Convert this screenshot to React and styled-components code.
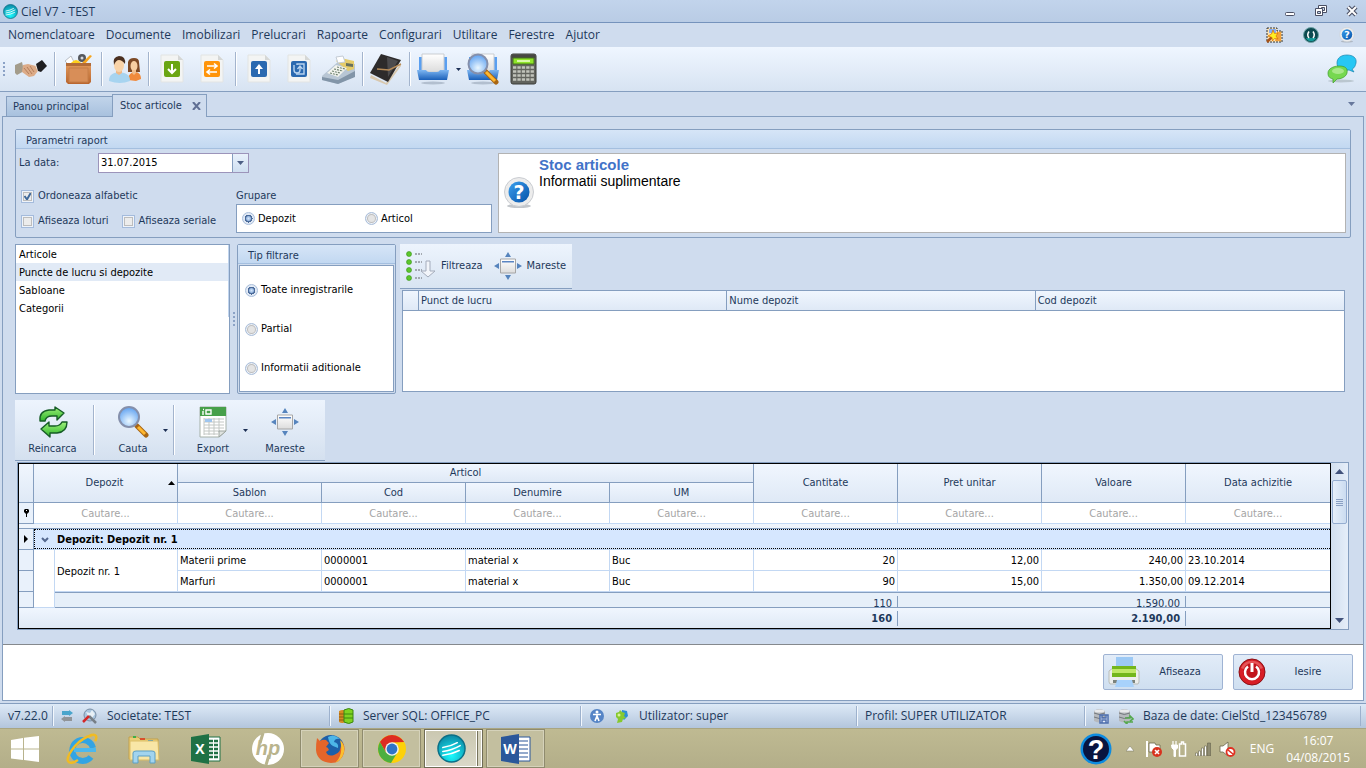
import React from "react";
import styled, { createGlobalStyle, css } from "styled-components";

const menus = [
  "Nomenclatoare",
  "Documente",
  "Imobilizari",
  "Prelucrari",
  "Rapoarte",
  "Configurari",
  "Utilitare",
  "Ferestre",
  "Ajutor",
];

const sources = ["Articole", "Puncte de lucru si depozite", "Sabloane", "Categorii"];

const rows = [
  ["Materii prime", "0000001", "material x", "Buc", "20", "12,00", "240,00", "23.10.2014"],
  ["Marfuri", "0000001", "material x", "Buc", "90", "15,00", "1.350,00", "09.12.2014"],
];

const App = () => {
  return (
    <Page>
      <GlobalStyle />
      <Gradients />
      <TitleBar>
        <CielIcon size={15} />
        <Title>Ciel V7 - TEST</Title>
        <WindowButton aria-label="Minimize">
          <svg width="14" height="14" viewBox="0 0 14 14">
            <rect x="2.5" y="8.5" width="9" height="3" rx="1" fill="#fff" stroke="#4a4f63" />
          </svg>
        </WindowButton>
        <WindowButton aria-label="Restore">
          <svg width="14" height="14" viewBox="0 0 14 14">
            <path d="M4.500 1.500h8v7h-8z" fill="#fff" stroke="#4a4f63" />
            <path d="M7.500 3.500h3v3h-3z" fill="#c2d2e9" stroke="#4a4f63" />
            <path d="M1.500 4.500h7v7h-7z" fill="#fff" stroke="#4a4f63" />
            <path d="M3.500 7.500h3v2h-3z" fill="#c2d2e9" stroke="#4a4f63" />
          </svg>
        </WindowButton>
        <WindowButton aria-label="Close">
          <svg width="14" height="14" viewBox="0 0 14 14">
            <path d="M3 3l8 8M11 3l-8 8" stroke="#4a4f63" strokeWidth="4.200" />
            <path d="M3 3l8 8M11 3l-8 8" stroke="#fff" strokeWidth="2" />
          </svg>
        </WindowButton>
      </TitleBar>

      <MenuBar>
        {menus.map((m) => (
          <MenuItem key={m}>{m}</MenuItem>
        ))}
        <MenuIcons>
          <WandIcon />
          <GlobeIcon />
          <HelpIcon size={16} />
        </MenuIcons>
      </MenuBar>

      <ToolBar>
        <Handle />
        <ToolButton aria-label="Parteneri"><HandshakeIcon /></ToolButton>
        <Separator />
        <ToolButton aria-label="Articole"><BoxIcon /></ToolButton>
        <Separator />
        <ToolButton aria-label="Personal"><PeopleIcon /></ToolButton>
        <Separator />
        <ToolButton aria-label="Intrari"><DocIcon fill="#6aa512" sign="down" /></ToolButton>
        <ToolButton aria-label="Transferuri"><DocIcon fill="#ff9408" sign="swap" /></ToolButton>
        <Separator />
        <ToolButton aria-label="Iesiri"><DocIcon fill="#2a69b0" sign="up" /></ToolButton>
        <ToolButton aria-label="Retururi"><DocIcon fill="#2a69b0" sign="turn" /></ToolButton>
        <ToolButton aria-label="Casa"><RegisterIcon /></ToolButton>
        <Separator />
        <ToolButton aria-label="Jurnal"><BookIcon /></ToolButton>
        <Separator />
        <ToolButton aria-label="Rapoarte"><TrayIcon /></ToolButton>
        <DropArrow aria-label="Alte rapoarte"><Caret /></DropArrow>
        <ToolButton aria-label="Cauta rapoarte"><TrayIcon search /></ToolButton>
        <ToolButton aria-label="Calculator"><CalculatorIcon /></ToolButton>
        <ChatButton aria-label="Chat"><ChatIcon /></ChatButton>
      </ToolBar>

      <TabStrip>
        <Tab>Panou principal</Tab>
        <Tab $active>
          Stoc articole
          <svg width="10" height="8" viewBox="0 0 10 8">
            <path d="M1 0l7 8M8 0l-7 8" stroke="#5f6f94" strokeWidth="2" />
          </svg>
        </Tab>
        <TabMenu aria-label="Lista ferestre"><Caret color="#66779c" wide /></TabMenu>
      </TabStrip>

      <Panel>
        <Content>
          <Group>
            <GroupTitle>Parametri raport</GroupTitle>
            <Params>
              <Options>
                <DateRow>
                  <DateLabel htmlFor="date">La data:</DateLabel>
                  <DateField>
                    <DateInput id="date" defaultValue="31.07.2015" />
                    <DateButton aria-label="Alege data"><Caret color="#4d5f85" wide /></DateButton>
                  </DateField>
                </DateRow>
                <CheckRow>
                  <Check><CheckBox defaultChecked />Ordoneaza alfabetic</Check>
                </CheckRow>
                <CheckRow>
                  <Check><CheckBox />Afiseaza loturi</Check>
                  <Check><CheckBox />Afiseaza seriale</Check>
                </CheckRow>
              </Options>
              <Grouping>
                <span>Grupare</span>
                <GroupingBox>
                  <RadioLabel><Radio name="group" defaultChecked />Depozit</RadioLabel>
                  <RadioLabel><Radio name="group" />Articol</RadioLabel>
                </GroupingBox>
              </Grouping>
              <Info>
                <HelpIcon size={32} />
                <div>
                  <InfoTitle>Stoc articole</InfoTitle>
                  <InfoText>Informatii suplimentare</InfoText>
                </div>
              </Info>
            </Params>
          </Group>

          <Filters>
            <List role="listbox">
              {sources.map((s, i) => (
                <ListItem key={s} role="option" aria-selected={i === 1} $selected={i === 1}>
                  {s}
                </ListItem>
              ))}
            </List>
            <Splitter><Dots /></Splitter>
            <FilterType>
              <GroupTitle>Tip filtrare</GroupTitle>
              <FilterOptions>
                <RadioLabel><Radio name="type" defaultChecked />Toate inregistrarile</RadioLabel>
                <RadioLabel><Radio name="type" />Partial</RadioLabel>
                <RadioLabel><Radio name="type" />Informatii aditionale</RadioLabel>
              </FilterOptions>
            </FilterType>
            <FilterResult>
              <FilterBar>
                <FlatButton><FilterIcon />Filtreaza</FlatButton>
                <FlatButton><EnlargeIcon />Mareste</FlatButton>
              </FilterBar>
              <DepotBox>
                <DepotTable>
                  <colgroup>
                    <col style={{ width: 16 }} />
                    <col />
                    <col />
                    <col />
                  </colgroup>
                  <thead>
                    <tr>
                      <th />
                      <th>Punct de lucru</th>
                      <th>Nume depozit</th>
                      <th>Cod depozit</th>
                    </tr>
                  </thead>
                </DepotTable>
              </DepotBox>
            </FilterResult>
          </Filters>

          <Actions>
            <Action $wide><ReloadIcon />Reincarca</Action>
            <ActionSeparator />
            <Action><SearchIcon />Cauta</Action>
            <DropArrow aria-label="Optiuni cautare"><Caret /></DropArrow>
            <ActionSeparator />
            <Action><SheetIcon />Export</Action>
            <DropArrow aria-label="Optiuni export"><Caret /></DropArrow>
            <Action $spaced><EnlargeIcon padded />Mareste</Action>
          </Actions>

          <StockGrid>
            <StockFrame>
              <StockTable>
                <colgroup>
                  <col style={{ width: 15 }} />
                  <col style={{ width: 21 }} />
                  <col style={{ width: 123 }} />
                  {Array.from({ length: 8 }, (_, i) => (
                    <col key={i} style={{ width: 144 }} />
                  ))}
                </colgroup>
                <thead>
                  <HeadRow $height={19}>
                    <Head rowSpan={2} />
                    <Head rowSpan={2} colSpan={2}>
                      <SortHead>
                        <span>Depozit</span>
                        <svg width="7" height="4" viewBox="0 0 7 4"><path d="M0 4l3.500-4L7 4z" /></svg>
                      </SortHead>
                    </Head>
                    <Head colSpan={4}>Articol</Head>
                    <Head rowSpan={2}>Cantitate</Head>
                    <Head rowSpan={2}>Pret unitar</Head>
                    <Head rowSpan={2}>Valoare</Head>
                    <Head rowSpan={2}>Data achizitie</Head>
                  </HeadRow>
                  <HeadRow $height={20}>
                    <Head>Sablon</Head>
                    <Head>Cod</Head>
                    <Head>Denumire</Head>
                    <Head>UM</Head>
                  </HeadRow>
                </thead>
                <tbody>
                  <BodyRow $height={21}>
                    <Marker>
                      <svg width="5" height="8" viewBox="0 0 5 8">
                        <path d="M1 0h3l1 1v2L3 5v3H2V5L0 3V1z" />
                        <path d="M2 1.500h1" stroke="#fff" />
                      </svg>
                    </Marker>
                    <FilterCell colSpan={2}><FilterInput aria-label="Depozit" /></FilterCell>
                    {["Sablon", "Cod", "Denumire", "UM", "Cantitate", "Pret unitar", "Valoare", "Data achizitie"].map((c) => (
                      <FilterCell key={c}><FilterInput aria-label={c} /></FilterCell>
                    ))}
                  </BodyRow>
                  <BodyRow $height={5}>
                    <GapCell colSpan={11} />
                  </BodyRow>
                  <BodyRow $height={21}>
                    <Marker>
                      <svg width="4" height="8" viewBox="0 0 4 8"><path d="M0 0l4 4-4 4z" /></svg>
                    </Marker>
                    <GroupCell colSpan={10}>
                      <GroupHead>
                        <svg width="8" height="6" viewBox="0 0 8 6">
                          <path d="M1 1l3 3 3-3" fill="none" stroke="#54688f" strokeWidth="2" />
                        </svg>
                        Depozit: Depozit nr. 1
                      </GroupHead>
                    </GroupCell>
                  </BodyRow>
                  {rows.map((row, i) => (
                    <BodyRow key={i} $height={21}>
                      <Marker />
                      {i === 0 && <Cell rowSpan={3} />}
                      {i === 0 && <Cell rowSpan={2}>Depozit nr. 1</Cell>}
                      {row.map((value, n) => (
                        <Cell key={n} $right={n > 3 && n < 7}>{value}</Cell>
                      ))}
                    </BodyRow>
                  ))}
                  <BodyRow $height={16}>
                    <Marker />
                    <SumCell colSpan={5} />
                    <SumCell><Sum>110</Sum></SumCell>
                    <SumCell colSpan={2}><Sum>1.590,00</Sum></SumCell>
                    <SumCell />
                  </BodyRow>
                </tbody>
                <tfoot>
                  <BodyRow $height={20}>
                    <TotalCell colSpan={7} />
                    <TotalCell><Total>160</Total></TotalCell>
                    <TotalCell colSpan={2}><Total>2.190,00</Total></TotalCell>
                    <TotalCell />
                  </BodyRow>
                </tfoot>
              </StockTable>
            </StockFrame>
            <ScrollBar>
              <svg width="9" height="5" viewBox="0 0 9 5"><path d="M0 5l4.500-5L9 5z" fill="#41527b" /></svg>
              <ScrollThumb />
              <svg width="9" height="5" viewBox="0 0 9 5"><path d="M0 0l4.500 5L9 0z" fill="#41527b" /></svg>
            </ScrollBar>
          </StockGrid>
        </Content>
        <Footer>
          <FooterButton><PrinterIcon /><span>Afiseaza</span></FooterButton>
          <FooterButton><PowerIcon /><span>Iesire</span></FooterButton>
        </Footer>
      </Panel>

      <StatusBar>
        <Status>v7.22.0</Status>
        <Status><SwapIcon /><ToolsIcon /><span>Societate: TEST</span></Status>
        <Status><DatabasesIcon /><span>Server SQL: OFFICE_PC</span></Status>
        <Status><UserIcon /><PuzzleIcon /><span>Utilizator: super</span></Status>
        <Status>Profil: SUPER UTILIZATOR</Status>
        <Status><DiskIcon /><DiskIcon sync /><span>Baza de date: CielStd_123456789</span></Status>
        <StatusEnd />
      </StatusBar>

      <TaskBar>
        <StartButton aria-label="Start">
          <svg width="28" height="26" viewBox="0 0 28 26" fill="#fff">
            <path d="M0 4l12-2v10.500H0zM13 1.800L28 0v12.500H13zM0 13.500h12V24L0 22.500zM13 13.500h15V26l-15-2z" />
          </svg>
        </StartButton>
        <Task aria-label="Internet Explorer"><ExplorerIcon /></Task>
        <Task aria-label="File Explorer"><FolderIcon /></Task>
        <Task aria-label="Excel"><OfficeIcon letter="X" color="#1f7145" /></Task>
        <Task aria-label="HP"><HpIcon /></Task>
        <Task $open aria-label="Firefox"><FirefoxIcon /></Task>
        <Task $open aria-label="Chrome"><ChromeIcon /></Task>
        <Task $open $current aria-label="Ciel"><CielIcon size={29} /></Task>
        <Task $open aria-label="Word"><OfficeIcon letter="W" color="#2a579a" /></Task>
        <Tray>
          <svg width="32" height="32" viewBox="0 0 32 32">
            <circle cx="16" cy="16" r="15.500" fill="#0d8be0" />
            <circle cx="16" cy="16" r="13" fill="#081440" />
            <text x="16" y="26" textAnchor="middle" fontFamily="Liberation Sans" fontSize="27" fontWeight="bold" fill="#fff">?</text>
          </svg>
          <svg width="8" height="6" viewBox="0 0 8 6"><path d="M0 5l4-5 4 5z" fill="#fff" stroke="#77745d" strokeWidth=".5" /></svg>
          <FlagIcon />
          <BatteryIcon />
          <SignalIcon />
          <VolumeIcon />
          <span>ENG</span>
          <Clock>
            <span>16:07</span>
            <span>04/08/2015</span>
          </Clock>
        </Tray>
      </TaskBar>
    </Page>
  );
};

/* ---------- icons ---------- */

const Gradients = () => (
  <Defs aria-hidden="true">
    <defs>
      <radialGradient id="teal" cx=".5" cy=".75" r=".7">
        <stop offset="0" stopColor="#19fbff" />
        <stop offset="1" stopColor="#0d8ea9" />
      </radialGradient>
      <linearGradient id="blue" x1="0" y1="0" x2="0" y2="1">
        <stop offset="0" stopColor="#7db6f2" />
        <stop offset="1" stopColor="#1a5fb8" />
      </linearGradient>
      <linearGradient id="help" x1="0" y1="0" x2="1" y2="1">
        <stop offset="0" stopColor="#3aa0ee" />
        <stop offset="1" stopColor="#0650a8" />
      </linearGradient>
      <linearGradient id="wood" x1="0" y1="0" x2="0" y2="1">
        <stop offset="0" stopColor="#e39a5c" />
        <stop offset="1" stopColor="#b9662f" />
      </linearGradient>
      <radialGradient id="lens" cx=".5" cy=".7" r=".7">
        <stop offset="0" stopColor="#eaf7ff" />
        <stop offset="1" stopColor="#5c9ff0" />
      </radialGradient>
      <linearGradient id="green" x1="0" y1="0" x2="0" y2="1">
        <stop offset="0" stopColor="#9df07a" />
        <stop offset="1" stopColor="#2fb52a" />
      </linearGradient>
      <linearGradient id="paper" x1="0" y1="0" x2="0" y2="1">
        <stop offset="0" stopColor="#fff" />
        <stop offset="1" stopColor="#dcdcdc" />
      </linearGradient>
    </defs>
  </Defs>
);

const Caret = ({ color = "#1c2f55", wide }) => (
  <svg width={wide ? 7 : 5} height={wide ? 4 : 3} viewBox="0 0 6 3" preserveAspectRatio="none">
    <path d="M0 0h6L3 3z" fill={color} />
  </svg>
);

const CielIcon = ({ size }) => (
  <svg width={size} height={size} viewBox="0 0 30 30">
    <circle cx="15" cy="15" r="14" fill="url(#teal)" stroke="#0b6f86" strokeWidth="1.500" />
    <path d="M6 14q8-1 15-5M6 18q9-1 18-6M6 22q9-1 17-5" fill="none" stroke="#fff" strokeWidth="1.600" strokeLinecap="round" />
  </svg>
);

const HelpIcon = ({ size }) => (
  <svg width={size} height={size} viewBox="0 0 32 32">
    <ellipse cx="16" cy="29" rx="12" ry="2" fill="#9aa0a8" opacity=".6" />
    <circle cx="16" cy="15" r="14.500" fill="#ececec" stroke="#c9ccd1" />
    <circle cx="16" cy="15" r="10.500" fill="url(#help)" />
    <text x="16" y="22" textAnchor="middle" fontFamily="DejaVu Sans" fontSize="19" fontWeight="bold" fill="#fff">?</text>
  </svg>
);

const WandIcon = () => (
  <svg width="17" height="16" viewBox="0 0 17 16">
    <path d="M1 1h10v3h5v11H1z" fill="#ffe3b0" stroke="#333" strokeDasharray="2 1" />
    <path d="M3 2h7v4H3z" fill="#86aef0" />
    <path d="M11 5h4v9h-6z" fill="#f4a23a" />
    <path d="M1 15l5-5" stroke="#a8541a" strokeWidth="2.500" />
    <path d="M7 3l1.500 3.500L12 6l-2 3 2 3-3.500-.5L6.500 14 6 10.500 2 9l3.500-2z" fill="#ffee22" stroke="#d96a00" strokeWidth=".7" />
  </svg>
);

const GlobeIcon = () => (
  <svg width="16" height="16" viewBox="0 0 16 16">
    <circle cx="8" cy="8" r="7.500" fill="#0d4a50" stroke="#6fa3a6" />
    <path d="M3 11a5.500 5.500 0 0010 0" fill="#159a98" />
    <path d="M6 4.500Q3.500 8 6 11M10 4.500Q12.500 8 10 11" fill="none" stroke="#fff" strokeWidth="1.500" />
  </svg>
);

const HandshakeIcon = () => (
  <svg width="32" height="32" viewBox="0 0 32 32">
    <path d="M0 12l7-3 2 9-7 4-2-2z" fill="#a39c8b" />
    <path d="M8 12l5-1 8 2 2 5-4 5-5 1-7-5z" fill="#dcab87" />
    <path d="M9 15l5 6M12 14l5 7M15 13l4 6" stroke="#a9714e" strokeWidth=".8" />
    <path d="M20 12l4-2 3 6-4 3z" fill="#f4ede6" />
    <path d="M21 11l6-4 5 6-6 6-3-1z" fill="#1f1f21" />
  </svg>
);

const BoxIcon = () => (
  <svg width="32" height="32" viewBox="0 0 32 32">
    <path d="M3 8l6-5 3 6-4 4z" fill="#fff" stroke="#b9bec6" />
    <path d="M9 10l5-2 4 3-2 3h-7z" fill="#ffd21c" />
    <circle cx="20" cy="5" r="4" fill="#55585e" />
    <circle cx="20" cy="5" r="1.500" fill="#d6d9de" />
    <path d="M9 10q5-6 10 0z" fill="#ffcf1a" />
    <path d="M20 10l8-8 2 1-8 9z" fill="#f7a51b" />
    <path d="M4 10h25v19l-2 2H6l-2-2z" fill="url(#wood)" />
    <path d="M4 10h25v3H4z" fill="#b26b38" />
    <path d="M7 15h19v14H7z" fill="#d88e58" stroke="#c67e48" />
  </svg>
);

const PeopleIcon = () => (
  <svg width="34" height="32" viewBox="0 0 34 32">
    <path d="M20 27c0-5 3-8 7-8s6 3 6 7l-5 2z" fill="#f08a3c" />
    <path d="M20 19V9q1-4 6-4t5 4l1 10z" fill="#7d4a26" />
    <ellipse cx="26" cy="13" rx="3.500" ry="5" fill="#f7cfa2" />
    <path d="M24 17h4v3l-2 2-2-2z" fill="#f0bd8b" />
    <path d="M1 28c0-6 3-8 10-9 8 1 11 3 11 9q-10 4-21 0z" fill="#a7d4f0" />
    <path d="M8 16h6v4l-3 2-3-2z" fill="#efb988" />
    <ellipse cx="11" cy="12" rx="5" ry="7" fill="#f9d3a8" />
    <path d="M6 12Q4 4 11 3q7 0 6 8-3-4-6-4T6 12z" fill="#4b3020" />
  </svg>
);

const DocIcon = ({ fill, sign }) => (
  <svg width="32" height="32" viewBox="0 0 32 32">
    <path d="M5 2h17l5 5v22H5z" fill="#f3f4f3" stroke="#e2e4e3" />
    <path d="M22 2v5h5z" fill="#d5d7d6" />
    <rect x="8" y="8" width="16" height="16" rx="2" fill={fill} />
    {sign === "down" && <path d="M16 11v9M12 16l4 4 4-4" fill="none" stroke="#fff" strokeWidth="2" />}
    {sign === "up" && <path d="M15 21v-5h-3l4-5 4 5h-3v5z" fill="#fff" />}
    {sign === "swap" && <path d="M11 13h9M18 10.500l3 2.500-3 2.500M21 19h-9M14 16.500L11 19l3 2.500" fill="none" stroke="#fff" strokeWidth="1.600" />}
    {sign === "turn" && (
      <g fill="none" stroke="#b9d4ef" strokeWidth="1.400">
        <path d="M14 12V11h7v10h-8" />
        <path d="M11 12v5q0 3 3 3t3-3v-3M14.500 16l2.500-3 2.500 3" />
      </g>
    )}
  </svg>
);

const RegisterIcon = () => (
  <svg width="34" height="32" viewBox="0 0 34 32">
    <path d="M0 23l17-15 16 3v12L16 31 0 27z" fill="#b8c6d4" />
    <path d="M0 24l16 3 17-9v6l-17 7-16-4z" fill="#8295a8" />
    <path d="M14 8l5-3 13 3v8l-6 2z" fill="#e5cc6b" />
    <path d="M5 20l9-8 11 3-9 9z" fill="#f3f4ee" />
    <path d="M8 20l8 2M10 18l8 2M12 16l9 2M15 14l8 2" stroke="#708472" strokeWidth="1.200" strokeDasharray="2 1" />
    <path d="M14 4l7-1 2 6-7 1z" fill="#fff" stroke="#c4ccd5" />
    <path d="M24 10l7 1v3l-7-1z" fill="#67715e" />
  </svg>
);

const BookIcon = () => (
  <svg width="34" height="32" viewBox="0 0 34 32">
    <path d="M2 22l15 8 15-20v3L18 32 1 25z" fill="#d8c8ae" />
    <path d="M12 1l20 6-13 22L1 20z" fill="#2d2b2b" />
    <path d="M18 4l11 4-10 16z" fill="#606064" opacity=".6" />
    <path d="M8 16l12 1 12-6" fill="none" stroke="#b68b58" strokeWidth="1.500" />
  </svg>
);

const TrayIcon = ({ search }) => (
  <svg width="32" height="32" viewBox="0 0 32 32">
    <ellipse cx="16" cy="30" rx="12" ry="1.500" fill="#8998aa" opacity=".5" />
    <path d="M2 4h28v15H2z" fill="#5a9ff0" />
    <path d="M5 1h22v18H5z" fill="url(#paper)" stroke="#c9ccd0" />
    <path d="M0 17h9q1 2 3 2h8q2 0 3-2h9l-2 10H2z" fill="url(#blue)" />
    {search && (
      <g>
        <path d="M18 18l11 11" stroke="#a86614" strokeWidth="5" strokeLinecap="round" />
        <path d="M19 19l9 9" stroke="#ffb72e" strokeWidth="3" />
        <circle cx="11" cy="11" r="9.500" fill="url(#lens)" stroke="#8590ac" strokeWidth="2" />
      </g>
    )}
  </svg>
);

const CalculatorIcon = () => (
  <svg width="32" height="32" viewBox="0 0 32 32">
    <rect x="4" y="1" width="25" height="30" rx="2" fill="#62645e" stroke="#3b3c38" />
    <path d="M5 2h23v3H5z" fill="#474743" />
    <path d="M6 5h21v6H6z" fill="#8fe52a" stroke="#44701c" />
    <path d="M10 7h13v2H10z" fill="#d9f9a8" />
    {[14, 18, 22, 26].map((y) => (
      <path key={y} d={`M6 ${y}.500h21`} stroke="#c1c3bb" strokeWidth="2.500" strokeDasharray="3.300 1.100" />
    ))}
  </svg>
);

const ChatIcon = () => (
  <svg width="32" height="32" viewBox="0 0 32 32">
    <ellipse cx="15" cy="28" rx="13" ry="1.500" fill="#a4b0b5" opacity=".6" />
    <path d="M21 2c6 0 10 3 9 8-1 4-2 5-4 6l2 3-5-2c-8 1-12-2-12-7s4-8 10-8z" fill="#27c7f4" stroke="#1682ae" strokeWidth=".7" />
    <path d="M13 13c6 0 9 2 8 7-1 4-6 6-10 6l-4 4v-4c-4-1-5-3-5-6 0-4 5-7 11-7z" fill="#76d850" stroke="#3c9b2a" strokeWidth=".7" />
    <ellipse cx="12" cy="18" rx="6" ry="3" fill="#c9f3b1" opacity=".6" />
  </svg>
);

const FilterIcon = () => (
  <svg width="30" height="30" viewBox="0 0 30 30">
    {[3, 11, 19, 27].map((y) => (
      <g key={y}>
        <circle cx="3" cy={y} r="2.500" fill="#5dc72b" stroke="#39931c" strokeWidth=".6" />
        <path d={`M9 ${y}h7`} stroke="#8d9299" strokeWidth="1.500" strokeDasharray="2 1" />
      </g>
    ))}
    <path d="M20 10h4v10h5l-7 6-7-6h5z" fill="#f2f5fa" stroke="#a4acbb" />
  </svg>
);

const EnlargeIcon = ({ padded }) => (
  <svg width={padded ? 32 : 28} height={padded ? 32 : 28} viewBox={padded ? "-2 -2 32 32" : "0 0 28 28"}>
    <path d="M14 0l3 5h-6zM14 28l3-5h-6zM0 14l5-3v6zM28 14l-5-3v6z" fill="#5684bd" />
    <path d="M6.500 7h15v14h-15z" fill="url(#paper)" stroke="#a6a6a6" />
    <path d="M8 9h12v1.500H8z" fill="#5a85c2" />
  </svg>
);

const ReloadIcon = () => (
  <svg width="32" height="32" viewBox="0 0 32 32" fill="url(#green)" stroke="#165c26" strokeWidth="1.400" strokeLinejoin="round">
    <path d="M3 15Q2 5 12 4h6V1l9 6-7 7v-4h-5q-6 0-7 5z" />
    <path d="M30 16q0 10-10 11h-7v4l-9-8 8-7v4h6q5 0 7-4z" />
  </svg>
);

const SearchIcon = () => (
  <svg width="32" height="32" viewBox="0 0 32 32">
    <path d="M20 20l9 9" stroke="#a86614" strokeWidth="5" strokeLinecap="round" />
    <path d="M21 21l7 7" stroke="#ffb72e" strokeWidth="3" />
    <circle cx="12" cy="11" r="10" fill="url(#lens)" stroke="#8590ac" strokeWidth="2" />
  </svg>
);

const SheetIcon = () => (
  <svg width="32" height="32" viewBox="0 0 32 32">
    <path d="M3 1h26v24l-7 6H3z" fill="#fff" stroke="#a5b0a8" />
    <path d="M3 1h26v9H3z" fill="#47a04a" />
    <path d="M6 3.500h1M6 5v4M9 4h5v4H9z" fill="none" stroke="#fff" strokeWidth="1.400" />
    <path d="M7 13h20M7 16h20M7 19h20M7 22h20M7 25h16M7 28h14M7 12v17M12 12v17M17 12v17M22 12v14" stroke="#c3c7c4" />
    <path d="M8 13h7v3H8z" fill="#9ec5ef" />
    <path d="M22 31v-6h7z" fill="#dfe3e0" stroke="#9ca49f" />
  </svg>
);

const PrinterIcon = () => (
  <svg width="32" height="32" viewBox="0 0 32 32">
    <path d="M8 1h17v12H8z" fill="#9cc9f5" />
    <path d="M1 15l4-3h22l4 3v11l-1 2H2l-1-2z" fill="#eceeec" stroke="#b9bdb9" />
    <path d="M4 10h24v11H4z" fill="#73b61b" />
    <path d="M4 13h24v4H4z" fill="#bfe866" />
    <path d="M5 24h22v3H5z" fill="#7b837c" />
    <path d="M9 24h15l2 7H7z" fill="#a8d2fb" />
  </svg>
);

const PowerIcon = () => (
  <svg width="28" height="28" viewBox="0 0 28 28">
    <circle cx="14" cy="14" r="13" fill="#d81e26" stroke="#8b0f14" />
    <path d="M3 10a12 12 0 0122 0q-11 6-22 0z" fill="#f18a8a" opacity=".5" />
    <circle cx="14" cy="14" r="9" fill="#c2141c" />
    <path d="M10 8.500a7 7 0 108 0" fill="none" stroke="#fff" strokeWidth="2.500" />
    <path d="M14 5v9" stroke="#fff" strokeWidth="3" />
  </svg>
);

const SwapIcon = () => (
  <svg width="12" height="12" viewBox="0 0 12 12">
    <path d="M1 1h7V0l4 3-4 3V5H1z" fill="#4aa5cc" />
    <path d="M11 11H4v1L0 9l4-3v1h7z" fill="#909498" />
  </svg>
);

const ToolsIcon = () => (
  <svg width="16" height="16" viewBox="0 0 16 16">
    <circle cx="8" cy="7" r="6" fill="#a9c6e0" stroke="#7b8fa5" />
    <path d="M4 4l4 1 2-3 3 4-3 4-4-2z" fill="#e8f0f6" />
    <path d="M7 8l7 7" stroke="#777f87" strokeWidth="2.500" />
    <path d="M1 14l6-6" stroke="#d42828" strokeWidth="2.500" />
  </svg>
);

const DatabasesIcon = () => (
  <svg width="16" height="16" viewBox="0 0 16 16">
    <path d="M1 3q4-2 7 0v11q-4 2-7 0z" fill="#d58a22" />
    <path d="M1 6h7M1 9h7M1 12h7" stroke="#8d5813" />
    <path d="M6 2q5-3 9 0v12q-4 3-9 0z" fill="#7ed321" stroke="#3c8612" />
    <path d="M6 6h9M6 10h9" stroke="#3c8612" />
  </svg>
);

const UserIcon = () => (
  <svg width="16" height="16" viewBox="0 0 16 16">
    <circle cx="8" cy="8" r="7" fill="#5584c6" />
    <circle cx="8" cy="4" r="1.500" fill="#fff" />
    <path d="M4 6.500h8M8 6v3M8 8l-2 5M8 8l2 5" stroke="#fff" strokeWidth="1.600" />
  </svg>
);

const PuzzleIcon = () => (
  <svg width="16" height="16" viewBox="0 0 16 16">
    <path d="M8 2l5 1 1 5-4 4-3-3z" fill="#2e8fd3" />
    <path d="M2 5l3-1 1-2 2 2 3 1-1 3 2 2-3 1-1 3-5 1 1-4-2-2z" fill="#86c92f" />
    <circle cx="5" cy="7" r="1.500" fill="#d9f09b" />
  </svg>
);

const DiskIcon = ({ sync }) => (
  <svg width="16" height="16" viewBox="0 0 16 16">
    <path d="M1 3q5-4 11 0v10q-5 3-11 0z" fill="#b6b9bd" />
    <path d="M1 5q5 3 11 0M1 9q5 3 11 0" fill="none" stroke="#74787d" />
    <ellipse cx="6.500" cy="3" rx="5" ry="1.500" fill="#e8e9eb" />
    {sync ? (
      <path d="M7 10h5V8l3 3-3 2M15 14H9v2l-3-3" fill="none" stroke="#55a84d" strokeWidth="1.600" />
    ) : (
      <path d="M7 7h8v8H7zM9 7v3h4V7M9 15v-3h4v3" fill="#e8eef9" stroke="#4d6fae" strokeWidth="1.500" />
    )}
  </svg>
);

const ExplorerIcon = () => (
  <svg width="32" height="32" viewBox="0 0 32 32">
    <path d="M27 15A10.500 10.500 0 1025 24" fill="none" stroke="#32a4e4" strokeWidth="6" />
    <path d="M8 15h22v4H8z" fill="#4cb8ee" />
    <path d="M21 4q7-4 9-1 1 2-1 5M9 13Q0 24 2 28q2 4 10-1M9 13Q16 5 26 2" fill="none" stroke="#f0bb24" strokeWidth="2.500" />
  </svg>
);

const FolderIcon = () => (
  <svg width="32" height="32" viewBox="0 0 32 32">
    <path d="M1 4h9l2 2h18v20H1z" fill="#e9cf78" stroke="#c3a04a" />
    <path d="M5 3h3v2H5z" fill="#3fae49" />
    <path d="M12 5h5v2h-5z" fill="#d8502b" />
    <path d="M20 7h5v2h-5z" fill="#2f93d4" />
    <path d="M2 8h28l1 19H2z" fill="#f8e6a6" stroke="#dbbd66" />
    <path d="M5 30V20q0-2 3-2h16q3 0 3 2v10h-5v-7H10v7z" fill="#a2d4ee" stroke="#5d9fc4" />
  </svg>
);

const OfficeIcon = ({ letter, color }) => (
  <svg width="32" height="32" viewBox="0 0 32 32">
    <path d="M17 4h13v24H17z" fill="#fff" stroke={color} />
    <path d="M19 8h9M19 12h9M19 16h9M19 20h9M19 24h9" stroke={color} strokeWidth={letter === "X" ? 2.5 : 1.2} />
    {letter === "X" && <path d="M23.500 5v22" stroke="#fff" />}
    <path d="M1 4l18-3v30L1 28z" fill={color} />
    <text x="10" y="21" textAnchor="middle" fontFamily="Open Sans" fontSize="14" fontWeight="bold" fill="#fff">{letter}</text>
  </svg>
);

const HpIcon = () => (
  <svg width="32" height="32" viewBox="0 0 32 32">
    <circle cx="16" cy="16" r="16" fill="#fff" />
    <path d="M8 10l3-10M17 22l-3 10" stroke="#b9b48d" strokeWidth="3" />
    <text x="16" y="22" textAnchor="middle" fontFamily="Liberation Sans" fontSize="20" fontStyle="italic" fontWeight="bold" fill="#b9b48d">hp</text>
  </svg>
);

const FirefoxIcon = () => (
  <svg width="32" height="32" viewBox="0 0 32 32">
    <circle cx="17" cy="15" r="13" fill="#1d5fa8" />
    <path d="M14 4q6-4 12 2-5-1-6 3 5 1 4 6l-5-2q-4-2-5-9z" fill="#4db6e8" />
    <path d="M3 5l3 3q3-2 6-1l3 3-3 4q2 0 3 3l-3 2q2 5 8 3 8-2 7-14 5 4 3 12-3 10-13 10Q3 29 2 17q0-7 1-12z" fill="#e4652a" />
    <path d="M26 7q5 4 4 12-2 8-9 11 9-8 5-23z" fill="#fbc02e" />
  </svg>
);

const ChromeIcon = () => (
  <svg width="30" height="30" viewBox="0 0 30 30">
    <circle cx="15" cy="15" r="14" fill="#fdd109" />
    <path d="M2.900 8A14 14 0 0127.100 8L15 8.500 9 18.500z" fill="#dd2c22" />
    <path d="M2.900 8A14 14 0 0014 29l7-11.500-12 1z" fill="#4caf3f" />
    <circle cx="15" cy="15" r="6.800" fill="#f4f4ec" />
    <circle cx="15" cy="15" r="5.400" fill="#2f74c8" />
  </svg>
);

const FlagIcon = () => (
  <svg width="17" height="16" viewBox="0 0 17 16">
    <path d="M1 0v16" stroke="#fff" strokeWidth="2" />
    <path d="M3 2h6l1 2h4v7H3z" fill="#fff" stroke="#69664d" strokeWidth=".8" />
    <circle cx="11" cy="11" r="5" fill="#d8321e" />
    <path d="M9 9l4 4M13 9l-4 4" stroke="#fff" strokeWidth="1.600" />
  </svg>
);

const BatteryIcon = () => (
  <svg width="16" height="16" viewBox="0 0 16 16" fill="none" stroke="#fff">
    <path d="M2 0v4M5 0v4" strokeWidth="1.200" />
    <path d="M.5 4h6v3l-2 2v6.500H3V9L1 7z" fill="#fff" />
    <path d="M8.500 3h2V1h2v2h2v12h-6z" strokeWidth="1.500" />
  </svg>
);

const SignalIcon = () => (
  <svg width="16" height="14" viewBox="0 0 16 14" stroke="#65624c" strokeWidth=".6">
    <path d="M.5 11h2v3h-2zM3.500 9h2v5h-2zM6.500 6h2v8h-2zM9.500 4h2v10h-2z" fill="#fff" />
    <path d="M12.500 1h3v13h-3z" fill="#8f8c72" />
  </svg>
);

const VolumeIcon = () => (
  <svg width="17" height="16" viewBox="0 0 17 16">
    <path d="M1 5h3l5-4v14l-5-4H1z" fill="#fff" stroke="#6a674f" strokeWidth=".8" />
    <circle cx="11.500" cy="11" r="4" fill="#fff" stroke="#e03022" strokeWidth="1.800" />
    <path d="M8.500 8.500l6 5" stroke="#e03022" strokeWidth="1.600" />
  </svg>
);

/* ---------- layout ---------- */

const edge = "#859ebf";
const tahoma = `"DejaVu Sans Condensed", "DejaVu Sans", sans-serif`;
const segoe = `"Open Sans", "Noto Sans", sans-serif`;

const GlobalStyle = createGlobalStyle`
  * { box-sizing: border-box; }
  body {
    margin: 0;
    background: #cfdcee;
    color: #1e395b;
    font: 11px/16px ${tahoma};
  }
  button, input { font: inherit; color: inherit; margin: 0; }
  button { padding: 0; border: 0; background: none; }
  svg { display: block; flex: none; }
`;
const Defs = styled.svg`
  position: absolute;
  width: 0;
  height: 0;
`;
const Page = styled.div`
  display: flex;
  flex-direction: column;
  min-height: 100vh;
`;
const TitleBar = styled.header`
  display: flex;
  align-items: center;
  height: 23px;
  padding: 0 7px 0 3px;
  border-bottom: 1px solid #7593bc;
  background: linear-gradient(#c2d4ec, #b9cce5);
  font: 12px/16px ${segoe};
`;
const Title = styled.span`
  flex: 1;
  margin-left: 3px;
  padding-top: 1px;
`;
const WindowButton = styled.button`
  margin-left: 17px;
`;
const MenuBar = styled.nav`
  display: flex;
  align-items: center;
  height: 24px;
  padding-left: 2px;
  font: 12px/16px ${segoe};
`;
const MenuItem = styled.button`
  padding: 0 5px 0 6px;
`;
const MenuIcons = styled.div`
  display: flex;
  align-items: center;
  gap: 20px;
  margin-left: auto;
  padding-right: 11px;
`;
const ToolBar = styled.div`
  display: flex;
  align-items: center;
  height: 45px;
  border-bottom: 1px solid ${edge};
  background: linear-gradient(#eff6ff, #d7e3f2);
`;
const Handle = styled.i`
  width: 2px;
  height: 14px;
  margin: 0 6px 0 3px;
  background: repeating-linear-gradient(#8ba2c6 0 2px, transparent 2px 4px);
`;
const ToolButton = styled.button`
  display: flex;
  justify-content: center;
  width: 40px;
`;
const Separator = styled.i`
  width: 2px;
  height: 34px;
  margin: 0 2px 0 3px;
  border-left: 1px solid #a3b4cd;
  background: #fff;
`;
const DropArrow = styled.button`
  display: flex;
  justify-content: center;
  width: 10px;
`;
const ChatButton = styled.button`
  margin: 0 8px 0 auto;
`;
const TabStrip = styled.div`
  display: flex;
  align-items: flex-end;
  height: 25px;
  padding: 0 6px;
  margin-bottom: -1px;
`;
const Tab = styled.button`
  display: flex;
  align-items: center;
  gap: 10px;
  height: 21px;
  padding: 1px 23px 0 6px;
  border: 1px solid ${edge};
  border-right: 0;
  background: linear-gradient(#c1d4ea, #a8c1de);
  ${(p) =>
    p.$active &&
    css`
      height: 23px;
      padding: 0 4px 0 7px;
      border-right: 1px solid ${edge};
      border-bottom: 0;
      background: #cfdcee;
      position: relative;
      z-index: 1;
    `}
`;
const TabMenu = styled.button`
  margin: 0 5px 11px auto;
`;
const Panel = styled.main`
  display: flex;
  flex-direction: column;
  flex: 1;
  margin: 0 2px 2px;
  border: 1px solid ${edge};
`;
const Content = styled.div`
  flex: 1;
  padding: 12px 12px 14px;
`;
const Group = styled.section`
  border: 1px solid ${edge};
  border-radius: 2px;
`;
const GroupTitle = styled.h2`
  height: 19px;
  margin: 0;
  padding: 3px 10px 0;
  border-bottom: 1px solid #a4bfdf;
  background: linear-gradient(#d6e5f7, #c2d8f1);
  font: inherit;
`;
const Params = styled.div`
  display: grid;
  grid-template-columns: 217px 256px 1fr;
  padding: 4px 4px 4px 3px;
`;
const Options = styled.div`
  display: flex;
  flex-direction: column;
  gap: 7px;
`;
const DateRow = styled.div`
  display: flex;
  align-items: center;
  margin-bottom: 7px;
`;
const DateLabel = styled.label`
  flex: none;
  width: 79px;
`;
/* reaches over the empty corner above the grouping box */
const DateField = styled.div`
  display: flex;
  flex: none;
  width: 151px;
  height: 20px;
  border: 1px solid #9c94ba;
`;
const DateInput = styled.input`
  flex: 1;
  min-width: 0;
  padding: 0 2px;
  border: 0;
  color: #000;
  background: #fff;
`;
const DateButton = styled.button`
  display: flex;
  align-items: center;
  justify-content: center;
  width: 16px;
  border-left: 1px solid ${edge};
  background: linear-gradient(#e8f1fb, #cfdff1);
`;
const CheckRow = styled.div`
  display: flex;
  gap: 13px;
  height: 18px;
  padding-left: 2px;
`;
const Check = styled.label`
  display: flex;
  align-items: center;
  gap: 4px;
`;
const CheckBox = styled.input.attrs({ type: "checkbox" })`
  appearance: none;
  width: 13px;
  height: 13px;
  border: 1px solid #a4bbdc;
  box-shadow: inset 0 0 0 1px #eef3fa, inset 0 0 0 2px #bdbdbd;
  background: #ececec;
  &:checked {
    background: #ececec
      url("data:image/svg+xml,%3Csvg xmlns='http://www.w3.org/2000/svg' viewBox='0 0 11 11'%3E%3Cpath d='M2.500 5l2.500 3.500L9 1.500' fill='none' stroke='%23416a9b' stroke-width='2'/%3E%3C/svg%3E");
  }
`;
const Grouping = styled.div`
  display: flex;
  flex-direction: column;
  justify-content: flex-end;
`;
const GroupingBox = styled.div`
  display: grid;
  grid-template-columns: 123px 1fr;
  height: 29px;
  padding-left: 5px;
  border: 1px solid ${edge};
  background: #fff;
`;
const RadioLabel = styled.label`
  display: flex;
  align-items: center;
  gap: 3px;
  color: #000;
`;
const Radio = styled.input.attrs({ type: "radio" })`
  appearance: none;
  width: 13px;
  height: 13px;
  border: 1px solid #a9bedb;
  border-radius: 50%;
  box-shadow: inset 0 0 0 1px #edf2f9, inset 0 0 0 2px #bebebe;
  background: #e4e4e4;
  &:checked {
    box-shadow: inset 0 0 0 1px #dfe8f4;
    background: radial-gradient(circle, #d6e6fa 0, #9dbce3 2px, #4a6a99 3px, #4a6a99 4px, #e3eaf4 4px);
  }
`;
const Info = styled.div`
  display: flex;
  height: 80px;
  margin-left: 6px;
  padding: 3px 4px;
  gap: 4px;
  border: 1px solid #b3b3b3;
  background: #fff;
  font: 14px/16px "Liberation Sans", Arial, sans-serif;
  > svg {
    align-self: center;
  }
`;
const InfoTitle = styled.h1`
  margin: 0;
  color: #4273c8;
  font: bold 15px/16px "Liberation Sans", Arial, sans-serif;
`;
const InfoText = styled.p`
  margin: 0;
  color: #000;
`;
const Filters = styled.div`
  display: flex;
  height: 150px;
  margin: 6px 6px 6px 0;
`;
const List = styled.ul`
  width: 215px;
  margin: 0;
  padding: 0;
  border: 1px solid ${edge};
  background: #fff;
  list-style: none;
`;
const ListItem = styled.li`
  height: 18px;
  padding: 1px 3px 0;
  line-height: 18px;
  color: #000;
  border-right: 1px solid #c0d4ee;
  background: ${(p) => (p.$selected ? "#e1eaf6" : "#fff")};
`;
const Splitter = styled.div`
  display: flex;
  align-items: center;
  justify-content: center;
  width: 7px;
`;
const Dots = styled.i`
  width: 2px;
  height: 14px;
  background: repeating-linear-gradient(#8ba2c6 0 2px, transparent 2px 4px);
`;
const FilterType = styled(Group)`
  display: flex;
  flex-direction: column;
  width: 159px;
`;
const FilterOptions = styled.div`
  display: flex;
  flex: 1;
  flex-direction: column;
  gap: 23px;
  margin: 1px;
  padding: 16px 5px 0;
  border: 1px solid ${edge};
  background: #fff;
`;
const FilterResult = styled.div`
  display: flex;
  flex: 1;
  flex-direction: column;
  align-items: flex-start;
  margin-left: 4px;
`;
const FilterBar = styled.div`
  display: flex;
  align-items: center;
  gap: 11px;
  height: 45px;
  padding: 0 6px;
  border-bottom: 1px solid ${edge};
  background: linear-gradient(#edf4fd, #d8e4f2);
`;
const FlatButton = styled.button`
  display: flex;
  align-items: center;
  gap: 5px;
`;
const DepotBox = styled.div`
  align-self: stretch;
  flex: 1;
  margin: 1px 0 2px 2px;
  border: 1px solid ${edge};
  background: #fff;
`;
const DepotTable = styled.table`
  width: 100%;
  table-layout: fixed;
  border-spacing: 0;
  th {
    height: 20px;
    padding: 0 2px;
    border: solid ${edge};
    border-width: 0 1px 1px 0;
    background: linear-gradient(#f0f6fe, #dfe9f6);
    font-weight: normal;
    text-align: left;
  }
  th:last-child {
    border-right: 0;
  }
`;
const Actions = styled.div`
  display: inline-flex;
  align-items: center;
  height: 61px;
  padding-right: 13px;
  border-bottom: 1px solid ${edge};
  background: linear-gradient(#edf4fd, #d4e0ef);
  vertical-align: top;
`;
const Action = styled.button`
  display: flex;
  flex-direction: column;
  align-items: center;
  gap: 3px;
  width: ${(p) => (p.$wide ? "75px" : "54px")};
  margin-left: ${(p) => (p.$spaced ? "8px" : "0")};
  padding-top: 3px;
`;
const ActionSeparator = styled(Separator)`
  height: 50px;
  margin: 0 11px 0 3px;
`;
const StockGrid = styled.div`
  display: flex;
  margin: 1px 2px 0;
  border: 1px solid ${edge};
`;
const StockFrame = styled.div`
  flex: 1;
  border: 1px solid #000;
  background: #fff;
`;
const StockTable = styled.table`
  width: 100%;
  table-layout: fixed;
  border-spacing: 0;
  line-height: 14px;
  td, th {
    padding: 0;
  }
  tr > :last-child {
    border-right: 0;
  }
`;
const HeadRow = styled.tr`
  height: ${(p) => p.$height}px;
`;
const Head = styled.th`
  border: solid ${edge};
  border-width: 0 1px 1px 0;
  background: linear-gradient(#f0f6fe, #dfe9f6);
  font-weight: normal;
  /* keeps the divider when UM closes the second header row */
  ${HeadRow} + ${HeadRow} &&:last-child {
    border-right: 1px solid ${edge};
  }
`;
const SortHead = styled.div`
  display: grid;
  grid-template-columns: 1fr 9px;
  align-items: center;
  span {
    padding-left: 7px;
  }
`;
const BodyRow = styled.tr`
  height: ${(p) => p.$height}px;
`;
const Cell = styled.td`
  border: solid #c3d8f3;
  border-width: 0 1px 1px 0;
  && {
    padding: 2px 2px 0;
  }
  color: #000;
  text-align: ${(p) => (p.$right ? "right" : "left")};
`;
const Marker = styled.td`
  border: solid ${edge};
  border-width: 0 1px 1px 0;
  background: #e9f1fb;
  svg {
    margin: 0 auto;
  }
`;
const FilterCell = styled.td`
  border: solid #c3d8f3;
  border-width: 0 1px 1px 0;
`;
const FilterInput = styled.input.attrs({ placeholder: "Cautare..." })`
  display: block;
  width: 100%;
  height: 20px;
  padding: 0 2px;
  border: 0;
  background: none;
  text-align: center;
  &::placeholder {
    color: #a5a5a5;
  }
`;
const GapCell = styled.td`
  border-bottom: 1px solid ${edge};
  background: #eef4fc;
`;
const GroupCell = styled.td`
  border-bottom: 1px solid #c3d8f3;
`;
const GroupHead = styled.div`
  display: flex;
  align-items: center;
  gap: 8px;
  height: 20px;
  padding: 1px 0 0 6px;
  border: 1px dotted #000;
  border-right: 0;
  background: #d6e7ff;
  color: #000;
  font-weight: bold;
`;
const SumCell = styled.td`
  border: solid ${edge};
  border-width: 1px 0;
  background: #e6eff9;
`;
/* the last visible row slides under the totals line */
const Sum = styled.div`
  height: 11px;
  margin-top: 3px;
  padding-right: 5px;
  overflow: hidden;
  border-right: 1px solid ${edge};
  line-height: 16px;
  text-align: right;
`;
const TotalCell = styled.td`
  background: linear-gradient(#f0f6fe, #dfe9f6);
  font-weight: bold;
`;
const Total = styled.div`
  padding: 1px 5px 0 0;
  border-right: 1px solid ${edge};
  text-align: right;
`;
const ScrollBar = styled.div`
  display: flex;
  flex-direction: column;
  align-items: center;
  width: 17px;
  padding: 6px 0;
  background: linear-gradient(90deg, #d2dfef, #e5eef9);
`;
const ScrollThumb = styled.div`
  width: 15px;
  height: 44px;
  margin: 6px 0 auto;
  border: 1px solid #95add0;
  border-radius: 2px;
  background:
    repeating-linear-gradient(#8aa0c3 0 1px, transparent 1px 2px) center / 7px 7px no-repeat,
    linear-gradient(90deg, #e6effa, #cbdcf0);
`;
const Footer = styled.footer`
  display: flex;
  align-items: flex-start;
  justify-content: flex-end;
  gap: 10px;
  height: 56px;
  padding: 9px 10px 0;
  border-top: 1px solid #85898d;
  background: #fff;
`;
const FooterButton = styled.button`
  display: flex;
  align-items: center;
  width: 120px;
  height: 36px;
  padding: 0 4px;
  border: 1px solid #9fb3d3;
  border-radius: 2px;
  background: linear-gradient(#e2ecf8, #cfdff0);
  span {
    flex: 1;
    padding-left: 2px;
  }
`;
const StatusBar = styled.div`
  display: grid;
  grid-template-columns: 52fr 277fr 251fr 276fr 228fr 276fr 6px;
  align-items: center;
  height: 25px;
  border-top: 1px solid ${edge};
  background: linear-gradient(#dde9f7, #b3c5dc);
  font: 12px/16px ${segoe};
`;
const Status = styled.div`
  display: flex;
  align-items: center;
  gap: 9px;
  height: 20px;
  padding-left: 8px;
  white-space: nowrap;
  & + & {
    border-left: 1px solid #9db1cd;
    box-shadow: inset 1px 0 #f2f7fd;
  }
`;
const StatusEnd = styled.i`
  height: 20px;
  border-left: 1px solid #9db1cd;
`;
const TaskBar = styled.div`
  display: flex;
  height: 40px;
  gap: 3px;
  border-top: 1px solid #a9a582;
  background: linear-gradient(#bfba92, #b3ae89);
`;
const StartButton = styled.button`
  display: flex;
  align-items: center;
  justify-content: center;
  width: 49px;
`;
const Task = styled.button`
  display: flex;
  align-items: center;
  justify-content: center;
  width: 59px;
  ${(p) =>
    p.$open &&
    css`
      border: 1px solid #8f8b6e;
      box-shadow: inset 0 0 0 1px #d5d2ba;
      background: #c3bf9f;
    `}
  ${(p) =>
    p.$current &&
    css`
      padding-right: 5px;
      border-color: #6f6c55;
      box-shadow: inset 0 0 0 1px #fff, inset -4px 0 #d3d1bd, inset -5px 0 #77745c, inset -6px 0 #fff;
      background: linear-gradient(#cac7b0, #dbd9c9);
    `}
`;
const Tray = styled.div`
  display: flex;
  align-items: center;
  gap: 8px;
  margin-left: auto;
  padding-right: 16px;
  color: #fff;
  font: 12px/17px ${segoe};
  > svg:first-child {
    margin-right: 6px;
  }
  > svg:nth-child(2) {
    margin-right: 4px;
  }
  > span {
    margin: 0 4px 0 6px;
  }
`;
const Clock = styled.div`
  display: flex;
  flex-direction: column;
  align-items: center;
`;

export default App;
